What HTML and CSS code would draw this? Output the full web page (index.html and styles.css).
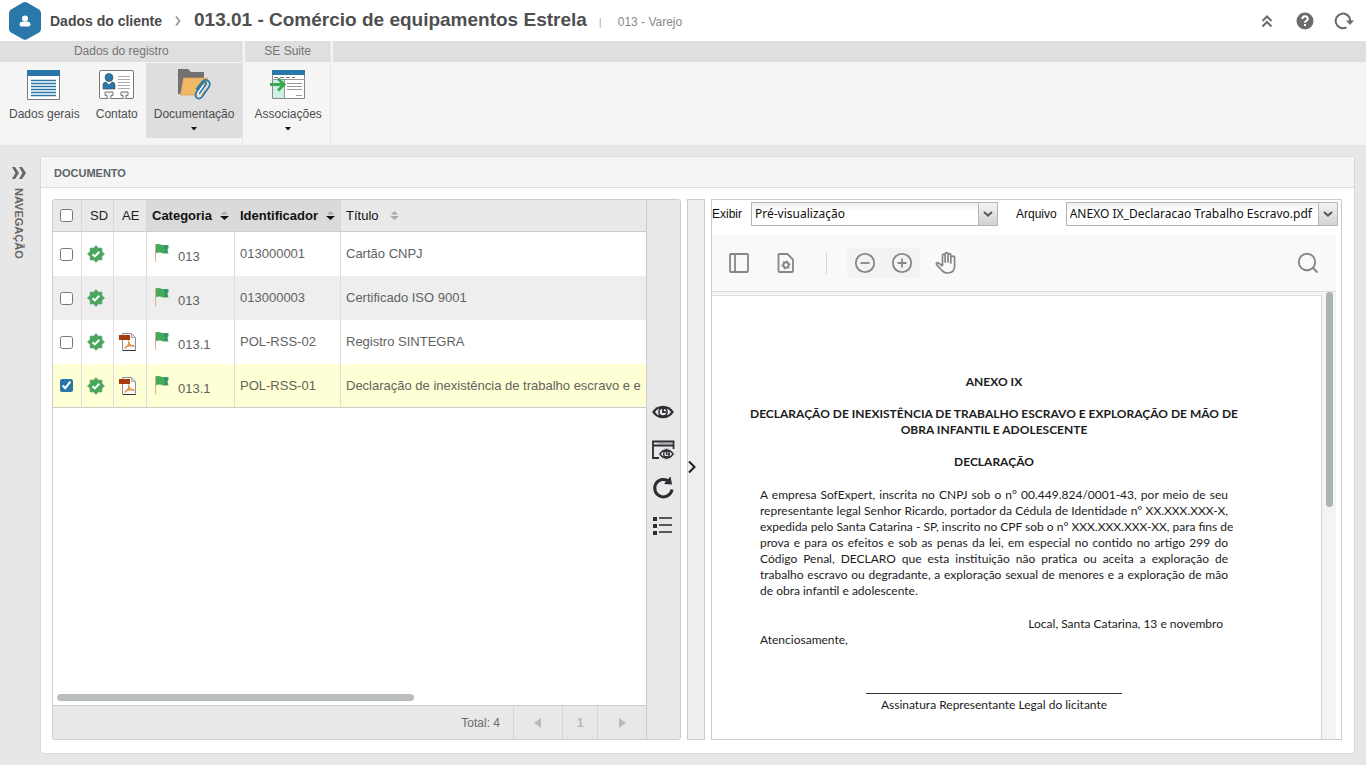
FILE: index.html
```html
<!DOCTYPE html>
<html lang="pt-BR">
<head>
<meta charset="utf-8">
<title>Dados do cliente</title>
<link rel="stylesheet" href="styles.css">
</head>
<body>
<svg class="sprite" aria-hidden="true">
  <symbol id="i-seal" viewBox="0 0 18 18">
    <path fill="#46a858" stroke="#8fa398" stroke-width=".6" d="M9 .4L11.400 3H15v3.600L17.600 9 15 11.400V15h-3.600L9 17.600 6.600 15H3v-3.600L.4 9 3 6.600V3h3.600z"/>
    <path fill="none" stroke="#fff" stroke-width="2" d="M5.500 9.200l2.300 2.200 4.500-4.600"/>
  </symbol>
  <symbol id="i-flag" viewBox="0 0 16 20">
    <path stroke="#dcae8c" stroke-width="1" d="M1.500 1v18"/>
    <path fill="#46ab58" d="M2 1.500c2-1 4-.3 6 .5h6.500v3l-1 1.500 1 4H9c-2-1.200-5-1.200-7-.3z"/>
    <path fill="#2b8f7a" d="M9.500 2.500h4v2.500l-1 1.500 1 3.500h-3l1-3.500z"/>
  </symbol>
  <symbol id="i-pdf" viewBox="0 0 18 18">
    <path fill="#fafafa" stroke="#8d8d8d" d="M3.500.500h9l4 4v13h-13z"/>
    <path fill="#ddd" stroke="#999" stroke-width=".7" d="M12.500.500v4h4z"/>
    <path stroke="#333" d="M4 17.500h12.500"/>
    <path fill="#a93a10" d="M0 2h11v5H0z"/>
    <path fill="none" stroke="#dc8f45" stroke-width="1.300" d="M9.500 7.500c1.500 3-1 6-4 8M9.800 9c.5 3 3 4 5.500 4.500M6.500 14c3-1.500 5-1.700 8.500-1.300"/>
  </symbol>
  <symbol id="i-sort" viewBox="0 0 10 10">
    <path class="sort-up" d="M1 4l4-4 4 4z"/><path class="sort-down" d="M0 5.500L5 10l5-4.500z"/>
  </symbol>
  <symbol id="i-drop" viewBox="0 0 12 8"><path fill="none" stroke="#5c5c5c" stroke-width="2.200" d="M2 2l4 3.500L10 2"/></symbol>
</svg>

<header class="topbar">
  <svg class="logo" viewBox="0 0 32 38"><path fill="#2a78a9" d="M14 .6q2-1 4 0l12 6.800q2 1.200 2 3.500v16q0 2.300-2 3.500l-12 6.900q-2 1-4 0L2 30.400Q0 29.200 0 26.900v-16Q0 8.600 2 7.400z"/><circle cx="16" cy="16.500" r="3" fill="#fff"/><path fill="#fff" d="M10.500 22.500q0-3 4-3h3q4 0 4 3 0 2-2 2h-7q-2 0-2-2z"/></svg>
  <a class="crumb" href="#">Dados do cliente</a>
  <svg class="crumb-sep" viewBox="0 0 6 10"><path fill="none" stroke="#999" stroke-width="1.800" d="M1 .5L4.500 5 1 9.500"/></svg>
  <h1 class="title">013.01 - Comércio de equipamentos Estrela</h1>
  <span class="bar">|</span>
  <span class="subtitle">013 - Varejo</span>
  <div class="top-actions">
    <button class="icon-btn" aria-label="Recolher"><svg width="18" height="18" viewBox="0 0 18 18"><path fill="none" stroke="#6b6b6b" stroke-width="2" d="M4.500 9L9 4.500 13.500 9M4.500 14.500L9 10l4.500 4.500"/></svg></button>
    <button class="icon-btn" aria-label="Ajuda"><svg width="18" height="18" viewBox="0 0 18 18"><circle cx="9" cy="9" r="8.500" fill="#6b6b6b"/><path fill="none" stroke="#fff" stroke-width="2" d="M6.300 7c0-3.500 5.500-3.500 5.500-.3 0 2-2.800 2-2.800 4"/><path fill="#fff" d="M8 12h2v2H8z"/></svg></button>
    <button class="icon-btn" aria-label="Atualizar"><svg width="20" height="18" viewBox="0 0 20 18"><path fill="none" stroke="#6b6b6b" stroke-width="2" d="M12.500 15.300A7.300 7.300 0 1 1 16.300 9"/><path fill="#6b6b6b" d="M12 8.500h8l-4 4.500z"/></svg></button>
  </div>
</header>

<nav class="ribbon">
  <section class="group">
    <h2 class="group-title">Dados do registro</h2>
    <div class="group-items">
      <button class="tool">
        <svg width="34" height="32" viewBox="0 0 34 32"><path fill="#fff" stroke="#777" d="M.5 1.500h32v29H.500z"/><path fill="#2a78a9" d="M0 1h33v6H0z"/><path stroke="#2a78a9" stroke-width="1.500" d="M4 11.500h25M4 14.500h25M4 17.500h25M4 20.500h25M4 23.500h25M4 26.500h25"/></svg>
        <span>Dados gerais</span>
      </button>
      <button class="tool">
        <svg width="36" height="32" viewBox="0 0 36 32"><rect x=".5" y="1.500" width="34" height="28" rx="1.500" fill="#fff" stroke="#777"/><circle cx="10" cy="8.500" r="4" fill="#2a78a9" stroke="#45525a" stroke-width=".7"/><path fill="#2a78a9" stroke="#45525a" stroke-width=".7" d="M4 20v-4q0-3 3-3l3 3 3-3q3 0 3 3v4z"/><path stroke="#aaa" d="M19 7.500h12M19 10.500h12M19 13.500h12M19 16.500h12M19 19.500h12"/><path fill="#f2f2f2" stroke="#777" d="M3 29.500h5v-3H6v-3.500h8v3.500h-2v3h12v-3h-2v-3.500h7v3.500h-2v3h5"/></svg>
        <span>Contato</span>
      </button>
      <button class="tool tool-active">
        <svg width="36" height="34" viewBox="0 0 36 34"><path fill="#717171" d="M2 1h10l3 3h13v12L5 26H2z"/><path fill="#f2b866" stroke="#d8a25a" stroke-width=".7" d="M7.500 10H32l-5 17H4.500z"/><path fill="none" stroke="#fff" stroke-width="4.500" d="M22 27l6-9"/><path fill="none" stroke="#2a78a9" stroke-width="1.700" stroke-linecap="round" d="M23.500 25.500l6-8.500c2-2.500-1-4.300-2.700-2l-6.500 9.500c-2.800 4.500 2.500 8.500 6 4l6.300-9c3.700-6-3-10-6.600-5.500L20.500 21"/></svg>
        <span>Documentação</span>
        <svg width="8" height="5" viewBox="0 0 8 5"><path fill="#111" d="M1 1h6L4 4.500z"/></svg>
      </button>
    </div>
  </section>
  <section class="group">
    <h2 class="group-title">SE Suite</h2>
    <div class="group-items">
      <button class="tool">
        <svg width="36" height="32" viewBox="0 0 36 32"><path fill="#fff" stroke="#888" d="M2.500 1.500h32v28h-32z"/><path fill="#2a78a9" d="M2 1h33v5H2z"/><path fill="#cdf1e3" d="M3 11h11v18H3z"/><path stroke="#999" d="M2.500 10.500h32M14.500 10.500V29M17 14.500h15M17 17.500h15M17 20.500h15M26 26.500h6"/><path stroke="#777" stroke-dasharray="4 2" d="M4 8.500h21"/><path fill="none" stroke="#39a850" stroke-width="3" d="M0 15.500h13M8 9.500l6 6-6 6"/></svg>
        <span>Associações</span>
        <svg width="8" height="5" viewBox="0 0 8 5"><path fill="#111" d="M1 1h6L4 4.500z"/></svg>
      </button>
    </div>
  </section>
  <div class="group-rest"></div>
</nav>

<main class="workspace">
  <aside class="side">
    <button class="side-btn"><svg width="14" height="12" viewBox="0 0 14 12"><path fill="#666" d="M0 0h3l4 6-4 6H0l3.500-6zM7 0h3l4 6-4 6H7l3.500-6z"/></svg><span class="side-label">NAVEGAÇÃO</span></button>
  </aside>

  <section class="panel">
    <h2 class="panel-title">DOCUMENTO</h2>
    <div class="panel-body">
      <div class="list">
        <div class="list-main">
          <div class="table-wrap">
            <table class="docs">
              <thead>
                <tr>
                  <th class="c-check"><input type="checkbox" aria-label="Selecionar todos"></th>
                  <th class="c-sd">SD</th>
                  <th class="c-ae">AE</th>
                  <th class="c-cat sorted"><span class="th-in">Categoria <svg class="sort"><use href="#i-sort"/></svg></span></th>
                  <th class="c-id sorted"><span class="th-in">Identificador <svg class="sort"><use href="#i-sort"/></svg></span></th>
                  <th class="c-title"><span class="th-in">Título <svg class="sort sort-off"><use href="#i-sort"/></svg></span></th>
                </tr>
              </thead>
              <tbody>
                <tr>
                  <td class="c-check"><input type="checkbox" aria-label="Selecionar 013000001"></td>
                  <td class="c-icon"><svg class="seal"><use href="#i-seal"/></svg></td>
                  <td class="c-icon"></td>
                  <td><span class="cat"><svg class="flag"><use href="#i-flag"/></svg><span class="cat-code">013</span></span></td>
                  <td>013000001</td>
                  <td>Cartão CNPJ</td>
                </tr>
                <tr>
                  <td class="c-check"><input type="checkbox" aria-label="Selecionar 013000003"></td>
                  <td class="c-icon"><svg class="seal"><use href="#i-seal"/></svg></td>
                  <td class="c-icon"></td>
                  <td><span class="cat"><svg class="flag"><use href="#i-flag"/></svg><span class="cat-code">013</span></span></td>
                  <td>013000003</td>
                  <td>Certificado ISO 9001</td>
                </tr>
                <tr>
                  <td class="c-check"><input type="checkbox" aria-label="Selecionar POL-RSS-02"></td>
                  <td class="c-icon"><svg class="seal"><use href="#i-seal"/></svg></td>
                  <td class="c-icon"><svg class="seal"><use href="#i-pdf"/></svg></td>
                  <td><span class="cat"><svg class="flag"><use href="#i-flag"/></svg><span class="cat-code">013.1</span></span></td>
                  <td>POL-RSS-02</td>
                  <td>Registro SINTEGRA</td>
                </tr>
                <tr class="selected">
                  <td class="c-check"><input type="checkbox" checked aria-label="Selecionar POL-RSS-01"></td>
                  <td class="c-icon"><svg class="seal"><use href="#i-seal"/></svg></td>
                  <td class="c-icon"><svg class="seal"><use href="#i-pdf"/></svg></td>
                  <td><span class="cat"><svg class="flag"><use href="#i-flag"/></svg><span class="cat-code">013.1</span></span></td>
                  <td>POL-RSS-01</td>
                  <td>Declaração de inexistência de trabalho escravo e e</td>
                </tr>
              </tbody>
            </table>
          </div>
          <div class="hscroll"><div class="hthumb"></div></div>
          <footer class="pager">
            <span class="total">Total: 4</span>
            <button class="pg pg-arrow" aria-label="Anterior"><svg width="8" height="10" viewBox="0 0 8 10"><path fill="#bbb" d="M7 0v10L0 5z"/></svg></button>
            <button class="pg pg-num">1</button>
            <button class="pg pg-arrow" aria-label="Próxima"><svg width="8" height="10" viewBox="0 0 8 10"><path fill="#bbb" d="M1 0v10l7-5z"/></svg></button>
          </footer>
        </div>
        <div class="strip">
          <button class="icon-btn" aria-label="Visualizar"><svg width="24" height="24" viewBox="0 0 24 24"><path fill="#2c2e33" d="M1 12q4.500-6.300 11-6.300T23 12q-4.500 6.300-11 6.300T1 12z"/><path fill="#e8e8e8" d="M4 12q1.500-2.500 4-3.500-1.800 3.500 0 7-2.500-1-4-3.500zM20 12q-1.500-2.500-4-3.500 1.800 3.500 0 7 2.500-1 4-3.500z"/><circle cx="12" cy="12" r="3.300" fill="#e8e8e8"/><path fill="none" stroke="#2c2e33" stroke-width="1.800" d="M12 8v4.200h3.200"/></svg></button>
          <button class="icon-btn" aria-label="Visualizar em janela"><svg width="24" height="24" viewBox="0 0 24 24"><path fill="none" stroke="#2c2e33" stroke-width="1.800" d="M8 20H2V3.500h20.500V11M2 7.500h20"/><path fill="none" stroke="#aaa" d="M7 5.500h14"/><path fill="#2c2e33" stroke="#e8e8e8" d="M7.500 16q3-5.500 8-5.500t8 5.500q-3 5.500-8 5.500T7.500 16z"/><path fill="#e8e8e8" d="M10 16q1-1.800 2.500-2.500-1 2.500 0 5Q11 17.800 10 16zM21 16q-1-1.800-2.500-2.500 1 2.500 0 5Q20 17.800 21 16z"/><circle cx="15.500" cy="16" r="2.300" fill="#e8e8e8"/><path fill="none" stroke="#2c2e33" stroke-width="1.300" d="M15.500 13.500v2.700H18"/></svg></button>
          <button class="icon-btn" aria-label="Atualizar lista"><svg width="24" height="24" viewBox="0 0 24 24"><path fill="none" stroke="#2c2e33" stroke-width="3" d="M21 13.500a8.700 8.700 0 1 1-3-8"/><path fill="#2c2e33" d="M19.500.500L21 8.500l-8-.5z"/></svg></button>
          <button class="icon-btn" aria-label="Opções"><svg width="24" height="24" viewBox="0 0 24 24"><path fill="#2c2e33" d="M2 3h4v4H2zM2 10h4v4H2zM2 17h4v4H2z"/><path stroke="#55575b" stroke-width="2" d="M8 4h13M8 11h13M8 18h13"/></svg></button>
        </div>
      </div>

      <button class="splitter" aria-label="Expandir"><svg width="10" height="14" viewBox="0 0 10 14"><path fill="none" stroke="#1c1c1c" stroke-width="2" d="M1 1.500L6.500 7 1 12.500"/></svg></button>

      <section class="viewer">
        <div class="fields">
          <label for="exibir">Exibir</label>
          <div class="combo combo-a"><select id="exibir"><option>Pré-visualização</option></select><span class="combo-btn"><svg width="12" height="8"><use href="#i-drop"/></svg></span></div>
          <label class="lbl-file" for="arquivo">Arquivo</label>
          <div class="combo combo-b"><select id="arquivo"><option>ANEXO IX_Declaracao Trabalho Escravo.pdf</option></select><span class="combo-btn"><svg width="12" height="8"><use href="#i-drop"/></svg></span></div>
        </div>
        <div class="pdf">
          <div class="pdf-bar">
            <button class="icon-btn" aria-label="Painel"><svg width="24" height="24" viewBox="0 0 24 24" fill="none" stroke="#868686" stroke-width="1.800"><rect x="3" y="3" width="18" height="18" rx="1"/><path d="M8 3v18"/></svg></button>
            <button class="icon-btn b-gear" aria-label="Configurações"><svg width="24" height="24" viewBox="0 0 24 24" fill="none" stroke="#868686" stroke-width="1.800"><path d="M5.500 3h8l5.500 5.500V20q0 1-1 1H5.500q-1 0-1-1V4q0-1 1-1z"/><circle cx="12" cy="14" r="2.600"/><path stroke-dasharray="1.800 1.860" d="M12 10.500a3.500 3.500 0 1 1 0 7 3.500 3.500 0 0 1 0-7z"/></svg></button>
            <span class="divider"></span>
            <span class="zoomers">
              <button class="icon-btn" aria-label="Diminuir"><svg width="24" height="24" viewBox="0 0 24 24" fill="none" stroke="#868686" stroke-width="1.800"><circle cx="12" cy="12" r="9.200"/><path d="M7.500 12h9"/></svg></button>
              <button class="icon-btn" aria-label="Ampliar"><svg width="24" height="24" viewBox="0 0 24 24" fill="none" stroke="#868686" stroke-width="1.800"><circle cx="12" cy="12" r="9.200"/><path d="M7.500 12h9M12 7.500v9"/></svg></button>
            </span>
            <button class="icon-btn" aria-label="Mover"><svg width="24" height="24" viewBox="0 0 24 24" fill="none" stroke="#868686" stroke-width="1.700" stroke-linejoin="round"><path d="M8.500 15V4.500q0-1.300 1.300-1.300t1.300 1.300V11 3q0-1.300 1.400-1.300T14 3v8-7q0-1.300 1.400-1.300T16.800 4v8-5.500q0-1.300 1.900-1.300t1.900 1.300V15q0 7-7 7-4 0-6-3l-4.800-5.200q-1-1.300.2-2 1-.5 2 .5L8.500 15"/></svg></button>
            <button class="icon-btn b-search" aria-label="Buscar"><svg width="24" height="24" viewBox="0 0 24 24" fill="none" stroke="#868686" stroke-width="1.900"><circle cx="11" cy="11" r="8.200"/><path d="M16.500 16.500l5 5"/></svg></button>
          </div>
          <div class="pdf-view">
            <article class="page">
              <h3>ANEXO IX</h3>
              <h3>DECLARAÇÃO DE INEXISTÊNCIA DE TRABALHO ESCRAVO E EXPLORAÇÃO DE MÃO DE<br>OBRA INFANTIL E ADOLESCENTE</h3>
              <h3>DECLARAÇÃO</h3>
              <div class="text">
                <p class="just">A empresa SofExpert, inscrita no CNPJ sob o n° 00.449.824/0001-43, por meio de seu representante legal Senhor Ricardo, portador da Cédula de Identidade n° XX.XXX.XXX-X, <span class="keep">expedida pelo Santa Catarina - SP, inscrito no CPF sob o n° XXX.XXX.XXX-XX, para fins de</span> prova e para os efeitos e sob as penas da lei, em especial no contido no artigo 299 do Código Penal, DECLARO que esta instituição não pratica ou aceita a exploração de trabalho escravo ou degradante, a exploração sexual de menores e a exploração de mão de obra infantil e adolescente.</p>
                <p class="place">Local, Santa Catarina, 13 e novembro</p>
                <p>Atenciosamente,</p>
                <p class="sign">Assinatura Representante Legal do licitante</p>
              </div>
            </article>
            <div class="vscroll"><div class="vthumb"></div></div>
          </div>
        </div>
      </section>
    </div>
  </section>
</main>
</body>
</html>
```

FILE: styles.css
```css
* { box-sizing: border-box; }
html { height: 100%; }
body {
  margin: 0;
  height: 100%;
  padding-bottom: 3px;
  display: flex;
  flex-direction: column;
  background: #fff;
  color: #555;
  font: 12px/16px "Liberation Sans", Arial, sans-serif;
}
button { border: 0; padding: 0; margin: 0; background: none; color: inherit; font: inherit; cursor: pointer; }
h1, h2, h3, p { margin: 0; font: inherit; }
svg { display: block; flex: none; }
.sprite { position: absolute; width: 0; height: 0; }
.icon-btn { display: flex; }

.topbar { display: flex; align-items: center; height: 41px; padding: 0 12px 0 9px; flex: none; }
.logo { width: 32px; height: 38px; }
.crumb { margin-left: 9px; font-size: 14px; font-weight: bold; color: #4a4a4a; text-decoration: none; }
.crumb-sep { width: 6px; height: 10px; margin: 0 13px; }
.title { font-size: 19px; line-height: 24px; padding-bottom: 2px; font-weight: bold; color: #4f4f4f; }
.bar { margin: 3px 16px 0 12px; color: #aaa; font-size: 11px; }
.subtitle { margin-top: 3px; color: #8a8a8a; }
.top-actions { display: flex; gap: 20px; margin-left: auto; }

.ribbon { display: flex; height: 104px; flex: none; background: #f5f5f5; }
.group { border-right: 1px solid #e6e6e6; margin-right: 2px; }
.group-title { height: 21px; line-height: 20px; text-align: center; background: #dfdfdf; color: #757575; }
.group-items { display: flex; padding: 1px 0 0 1px; }
.group-rest { flex: 1; height: 21px; background: #dfdfdf; }
.tool { display: flex; flex-direction: column; align-items: center; height: 75px; padding: 5px 8px 0; color: #4d4d4d; }
.tool > svg:first-child { height: 34px; }
.tool span { margin-top: 4px; }
.tool span + svg { margin-top: 4px; }
.tool-active { background: #dedede; }

.workspace { display: flex; flex: 1; min-height: 0; background: #e7e7e7; padding: 11px 11px 11px 0; }
.side { width: 40px; flex: none; padding: 11px 0 0 12px; }
.side-btn { display: flex; flex-direction: column; align-items: center; gap: 9px; }
.side-label { writing-mode: vertical-rl; font-size: 11px; line-height: 14px; font-weight: bold; color: #666; }
.panel { flex: 1; min-width: 0; display: flex; flex-direction: column; background: #fff; border: 1px solid #d9d9d9; border-radius: 3px; }
.panel-title { height: 31px; line-height: 32px; padding-left: 13px; font-size: 11px; font-weight: bold; color: #5c6468; background: #f5f5f5; border-bottom: 1px solid #dcdcdc; }
.panel-body { flex: 1; min-height: 0; display: flex; gap: 6px; padding: 11px 12px 13px 11px; }

.list { flex: 1; min-width: 0; display: flex; border: 1px solid #ccc; border-radius: 3px; overflow: hidden; }
.list-main { flex: 1; min-width: 0; display: flex; flex-direction: column; }
.table-wrap { flex: 1; min-height: 0; overflow: hidden; }
.docs { table-layout: fixed; width: 100%; border-collapse: separate; border-spacing: 0; font-size: 13px; color: #626260; }
.docs th { height: 32px; padding: 0 5px; text-align: left; font-size: 13px; font-weight: bold; color: #111; background: #e9e9e9; border-right: 1px solid #d9d9d9; border-bottom: 1px solid #ccc; }
.docs td { height: 44px; padding: 0 5px; border-right: 1px solid #dedede; white-space: nowrap; }
.docs th:last-child, .docs td:last-child { border-right: 0; }
.docs tbody tr:nth-child(even) { background: #eee; }
.docs tbody tr.selected { background: #feffd4; }
.docs .selected td { border-bottom: 1px solid #ccc; }
.docs .sorted { background: #dadada; }
.docs th.c-sd, .docs th.c-ae { font-weight: normal; padding-left: 8px; color: #222; }
.docs th.c-title { font-weight: normal; }
.docs .c-check { padding: 0 2px 1px 0; text-align: center; }
.docs input { width: 13px; height: 13px; margin: 0; vertical-align: middle; accent-color: #2a75a8; }
.c-check { width: 29px; }
.c-sd { width: 32px; }
.c-ae { width: 33px; }
.c-cat { width: 88px; }
.c-id { width: 106px; }
.docs td.c-icon { padding: 0 5px; }
.seal { width: 18px; height: 18px; }
.th-in { display: flex; align-items: center; gap: 8px; }
.c-title .th-in { gap: 11px; }
.sort { width: 9px; height: 9px; fill: #111; }
.sort-up { fill: #aaa; }
.sort-off { fill: #aaa; }
.cat { display: flex; gap: 8px; padding-left: 2px; }
.flag { width: 16px; height: 20px; }
.cat-code { padding-top: 6px; }

.hscroll { flex: none; height: 12px; padding: 1px 4px 0; }
.hthumb { width: 61%; height: 7px; border-radius: 4px; background: #b9bdbd; }
.pager { flex: none; height: 34px; display: flex; align-items: center; justify-content: flex-end; background: #e8e8e8; border-top: 1px solid #ccc; color: #6b6b6b; }
.total { margin-right: 13px; font-size: 12px; }
.pg { display: flex; align-items: center; justify-content: center; align-self: stretch; border-left: 1px solid #d5d5d5; }
.pg-arrow { width: 49px; }
.pg-num { width: 35px; color: #bbb; font-size: 13px; font-weight: bold; }
.strip { flex: none; width: 34px; display: flex; flex-direction: column; align-items: center; gap: 14px; padding: 200px 2px 0 0; background: #e8e8e8; border-left: 1px solid #ccc; }

.splitter { flex: none; width: 18px; display: flex; align-items: center; justify-content: flex-start; padding-bottom: 5px; background: #eee; border: 1px solid #ccc; }

.viewer { flex: 1 1 4px; min-width: 0; display: flex; flex-direction: column; border: 1px solid #ccc; color: #111; }
.fields { flex: none; display: flex; align-items: flex-start; padding: 2px 3px 0 0; height: 35px; }
.fields label { line-height: 24px; }
.combo { display: grid; height: 24px; border: 1px solid #b5b5b5; background: linear-gradient(#eee, #fff 8px); }
.combo-a { width: 247px; margin-left: 9px; }
.combo-b { flex: 1; min-width: 0; margin-left: 9px; }
.lbl-file { margin-left: 18px; }
.combo select { grid-area: 1 / 1; width: 100%; min-width: 0; border: 0; margin: 0; padding: 0 20px 0 3px; appearance: none; background: transparent; color: #111; font: 12px/20px "Noto Sans", sans-serif; }
.combo-btn { grid-area: 1 / 1; justify-self: end; width: 19px; display: flex; align-items: center; justify-content: center; border-left: 1px solid #b5b5b5; background: linear-gradient(#f4f4f4, #d2d2d2); pointer-events: none; }

.pdf { flex: 1; min-height: 0; display: flex; flex-direction: column; margin-right: 5px; }
.pdf-bar { flex: none; height: 57px; display: flex; align-items: center; padding: 0 16px 0 15px; background: #f9f9f9; border-bottom: 1px solid #dcdcdc; }
.b-gear { margin-left: 23px; }
.divider { width: 1px; height: 22px; margin: 0 20px 0 28px; background: #d5d5d5; }
.zoomers { display: flex; gap: 13px; padding: 3px 6px; margin-right: 14px; background: #f2f3f5; border-radius: 4px; }
.b-search { margin-left: auto; }
.pdf-view { flex: 1; min-height: 0; display: flex; background: #f3f4f5; padding-top: 3px; }
.page { flex: 1; min-width: 0; overflow: hidden; padding: 78px 83px 0 38px; background: #fff; border-top: 1px solid #ddd; border-right: 1px solid #d5d5d5; font: 12px/16px Lato, sans-serif; color: #1c1c1c; }
.page h3 { font-weight: bold; text-align: center; margin-bottom: 16px; }
.text { padding: 1px 10px 0; }
.just { text-align: justify; }
.keep { white-space: nowrap; }
.place { text-align: right; margin: 17px 5px 0 0; }
.sign { width: 256px; margin: 45px auto 0; padding-top: 3px; border-top: 1px solid #333; text-align: center; white-space: nowrap; }
.vscroll { width: 14px; flex: none; padding-left: 4px; margin-top: -3px; }
.vthumb { width: 7px; height: 48%; border-radius: 4px; background: #aab4b4; }
```
